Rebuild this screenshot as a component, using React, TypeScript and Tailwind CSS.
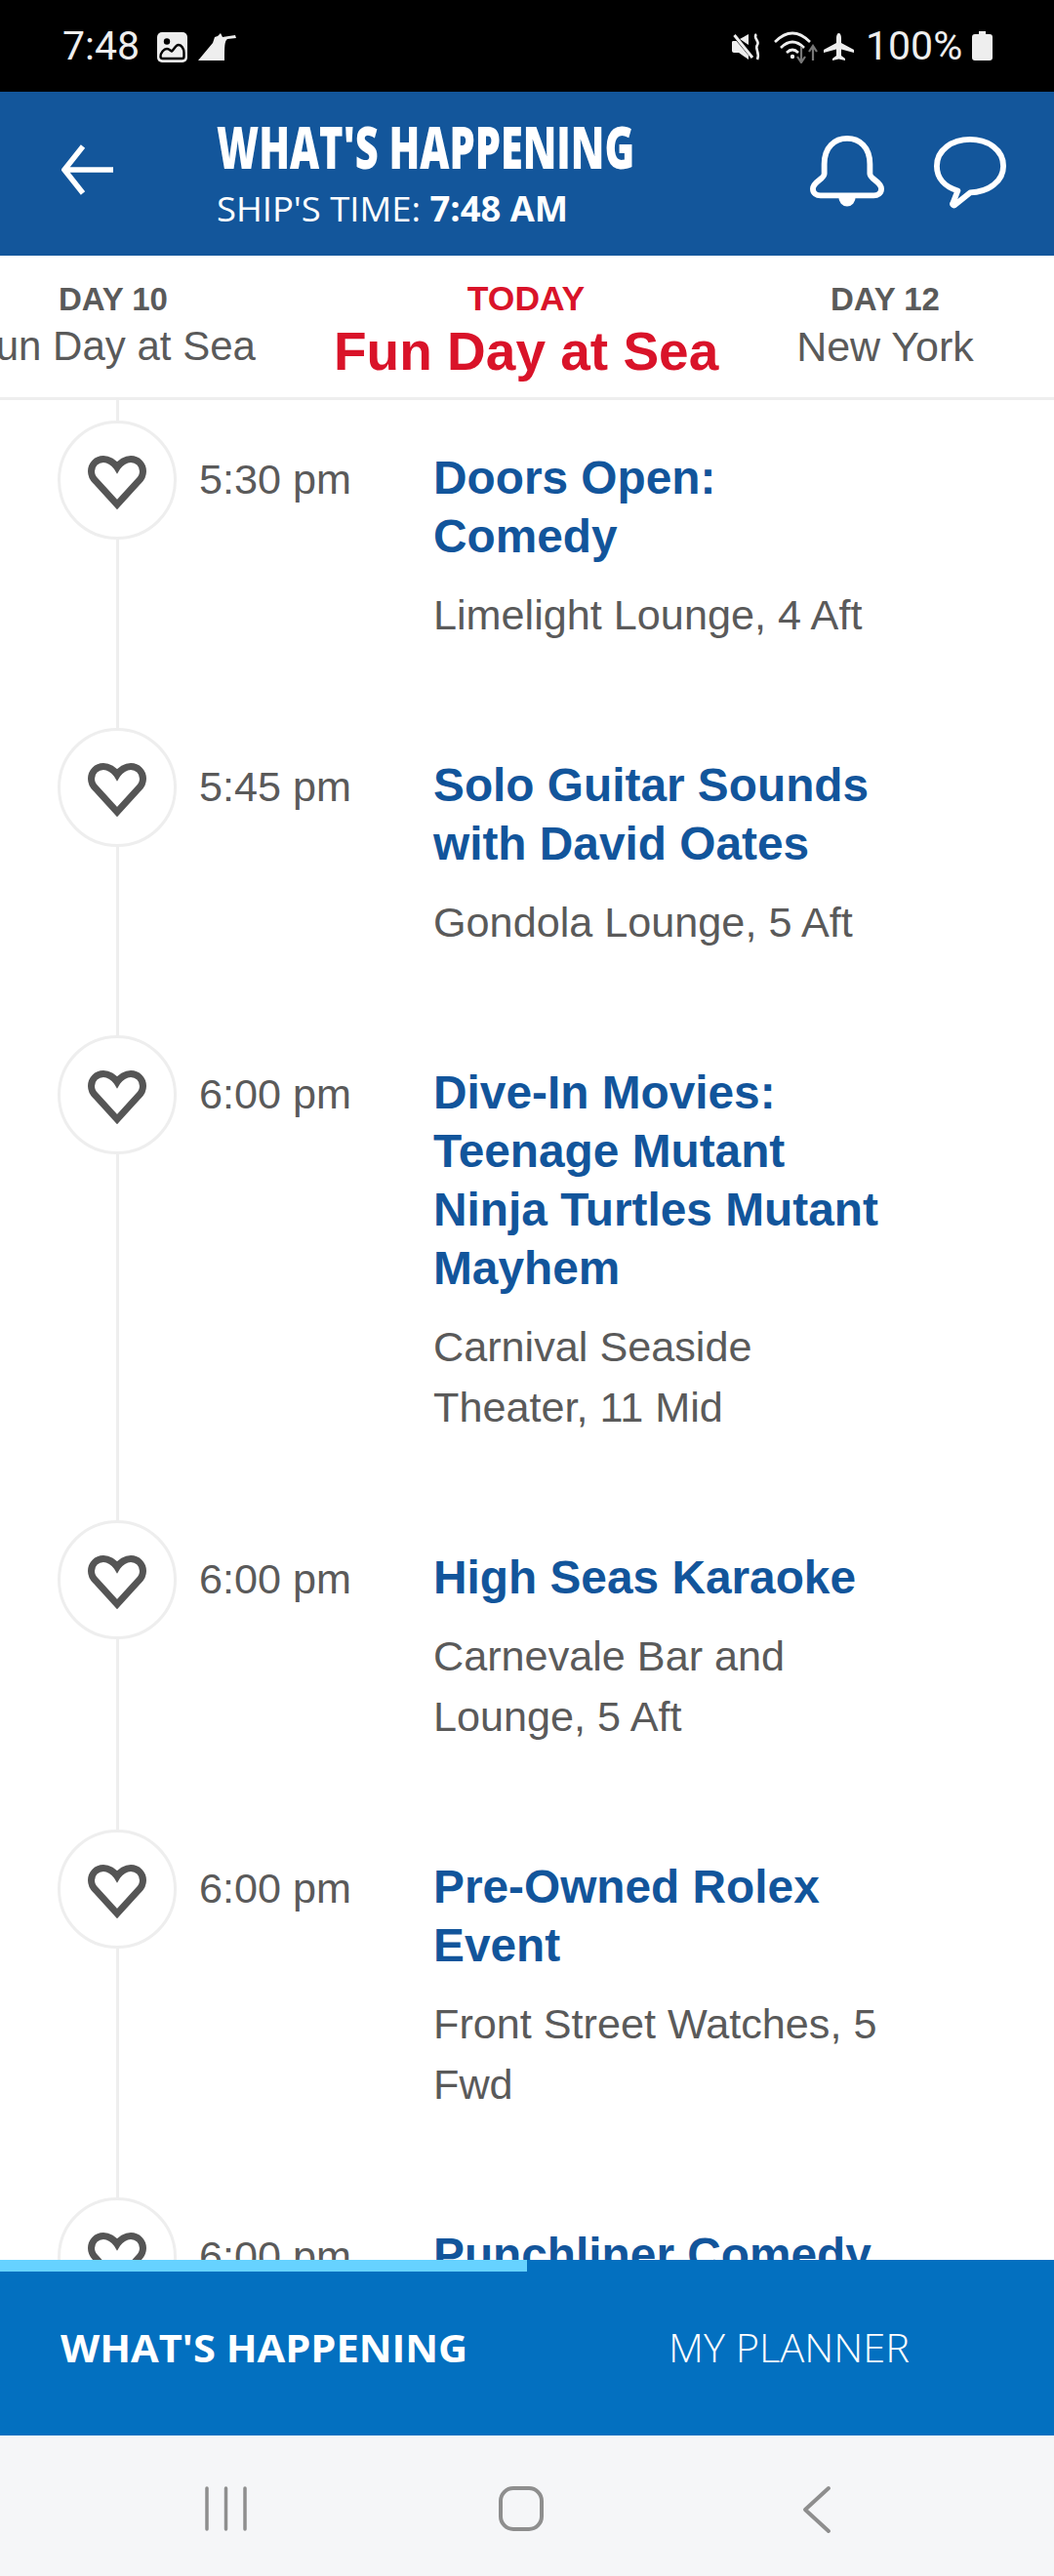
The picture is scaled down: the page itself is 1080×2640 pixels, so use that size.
import React from "react";

const events = [
  { time: "5:30 pm", title: "Doors Open: Comedy", place: "Limelight Lounge, 4 Aft" },
  { time: "5:45 pm", title: "Solo Guitar Sounds with David Oates", place: "Gondola Lounge, 5 Aft" },
  { time: "6:00 pm", title: "Dive-In Movies: Teenage Mutant Ninja Turtles Mutant Mayhem", place: "Carnival Seaside Theater, 11 Mid" },
  { time: "6:00 pm", title: "High Seas Karaoke", place: "Carnevale Bar and Lounge, 5 Aft" },
  { time: "6:00 pm", title: "Pre-Owned Rolex Event", place: "Front Street Watches, 5 Fwd" },
  { time: "6:00 pm", title: "Punchliner Comedy", place: "Punchliner Comedy Club, 4 Aft" },
];

function Heart() {
  return (
    <svg width="60" height="56" viewBox="0 0 60 56" fill="none" stroke="#555555" strokeWidth="7" strokeLinejoin="miter">
      <path d="M30 12 C27 7 21 3.5 16 3.5 C9 3.5 3.5 9 3.5 16 C3.5 20 5 23 8 26 L30 50 L52 26 C55 23 56.5 20 56.5 16 C56.5 9 51 3.5 44 3.5 C39 3.5 33 7 30 12 Z" />
    </svg>
  );
}

function EventRow({ time, title, place }: { time: string; title: string; place: string }) {
  return (
    <div className="flex shrink-0 pl-[59px]">
      <div className="flex w-[122px] shrink-0 flex-col items-center">
        <div className="flex h-[122px] w-[122px] shrink-0 items-center justify-center rounded-full border-[3px] border-[#eeeeee] pt-[6px]">
          <Heart />
        </div>
        <div className="w-[3px] flex-1 bg-[#eeeeee]" />
      </div>
      <div className="w-[263px] shrink-0 pl-[23px] pt-[29px] text-[43.2px] leading-[62px] text-[#5a5a5a]">{time}</div>
      <div className="w-[472px] shrink-0 pt-[29px] pb-[85px]">
        <div className="text-[47.8px] font-bold leading-[60px] text-[#12559b]">{title}</div>
        <div className="mt-[19px] w-[466px] text-[43.2px] leading-[62px] text-[#5a5a5a]">{place}</div>
      </div>
    </div>
  );
}

export default function App() {
  return (
    <div className="flex h-[2640px] w-[1080px] flex-col overflow-hidden bg-white font-['Liberation_Sans',sans-serif]">
      {/* status bar */}
      <div className="flex h-[94px] shrink-0 items-center bg-black pl-[64px] text-[#eeeeee]">
        <span className="w-[97px] font-['Roboto',sans-serif] text-[41px] leading-none">7:48</span>
        <svg width="31" height="31" viewBox="0 0 31 31" className="mt-[2px]">
          <rect width="31" height="31" rx="5" fill="#eeeeee" />
          <circle cx="10" cy="9.5" r="3.2" fill="#000" />
          <path d="M3.5 25 C3.5 21 7 17 10 17 C12.5 17 13.5 19 15 19.5 C17 18 19 13 22 13 C25 13 27.5 17 27.5 21 L27.5 25 C27.5 26.5 26.5 27 25.5 27 L5.5 27 C4.5 27 3.5 26.5 3.5 25 Z" fill="none" stroke="#000" strokeWidth="2.4" />
        </svg>
        <svg width="40" height="28" viewBox="0 0 40 28" className="ml-[11px] mt-[2px]">
          <path d="M0 28 L15 10 L17 4 L20 3 L23 0 L25 4 L38 2 L39 5 L30 6 C27 8 27 14 27 28 Z" fill="#eeeeee" />
        </svg>
        <svg width="30" height="28" viewBox="0 0 30 28" fill="#eeeeee" className="ml-[507px] mt-[2px]">
          <path d="M0 9 C0 8 1 8 2 8 L7 8 L17 16 L17 27 L7 20 L2 20 C1 20 0 19 0 18 Z" />
          <path d="M2 1 L22 25" stroke="#000" strokeWidth="5" />
          <path d="M2.5 2 L21 25" stroke="#eeeeee" strokeWidth="3" />
          <path d="M8 6 L17 1 L17 12 Z" />
          <path d="M25 1 C21 5 29 8 26 12 C23 16 29 19 26 27" fill="none" stroke="#eeeeee" strokeWidth="2.6" />
        </svg>
        <svg width="48" height="33" viewBox="0 0 48 33" fill="none" className="ml-[13px] mt-[2px]">
          <path d="M1 11 C13 -1 25 -1 37 11" stroke="#eeeeee" strokeWidth="2.6" />
          <path d="M7 17 C15 9 23 9 31 17" stroke="#eeeeee" strokeWidth="2.6" />
          <path d="M13 22 C17 18 21 18 25 22" stroke="#eeeeee" strokeWidth="2.6" />
          <circle cx="19" cy="26" r="2.2" fill="#eeeeee" />
          <path d="M28 16 L28 31 M24 26 L28 32 L32 26" stroke="#777777" strokeWidth="2.2" />
          <path d="M40 30 L40 16 M36 21 L40 15 L44 21" stroke="#777777" strokeWidth="2.2" />
        </svg>
        <svg width="31" height="28" viewBox="0 0 31 28" fill="#eeeeee" className="ml-[3px] mt-[2px]">
          <path d="M15.5 0 C17 0 18 2 18 5 L18 10 L31 17 L31 20 L18 16.5 L18 23 L22 26 L22 28 L15.5 26.5 L9 28 L9 26 L13 23 L13 16.5 L0 20 L0 17 L13 10 L13 5 C13 2 14 0 15.5 0 Z" />
        </svg>
        <span className="ml-[12px] w-[109px] font-['Roboto',sans-serif] text-[41px] leading-none">100%</span>
        <svg width="21" height="30" viewBox="0 0 21 30" fill="#eeeeee">
          <path d="M7 0 L14 0 L14 3 L18 3 C20 3 21 4 21 6 L21 27 C21 29 20 30 18 30 L3 30 C1 30 0 29 0 27 L0 6 C0 4 1 3 3 3 L7 3 Z" />
        </svg>
      </div>

      {/* header */}
      <div className="flex h-[168px] shrink-0 bg-[#13569b] text-white">
        <svg width="54" height="54" viewBox="0 0 54 54" fill="none" stroke="white" strokeWidth="5.5" className="ml-[63px] mt-[53px]">
          <path d="M22 3 L3 27 L22 51 M3 27 L53 27" />
        </svg>
        <div className="ml-[105px] w-[600px] pt-[24px] font-['Open_Sans',sans-serif]">
          <div className="origin-left scale-x-[0.692] whitespace-nowrap text-[60px] font-extrabold leading-[64px]">WHAT&apos;S HAPPENING</div>
          <div className="mt-[10px] origin-left scale-x-[1.04] whitespace-nowrap text-[35px] leading-[44px]">
            SHIP&apos;S TIME: <span className="font-bold">7:48 AM</span>
          </div>
        </div>
        <svg width="76" height="74" viewBox="0 0 78 76" fill="none" stroke="white" strokeWidth="6" className="ml-[8px] mt-[45px]">
          <path d="M15 40 L15 30 C15 12 26 3 39 3 C52 3 63 12 63 30 L63 40 C63 46 75 48 75 56 C75 61 71 63 67 63 L11 63 C7 63 3 61 3 56 C3 48 15 46 15 40 Z" />
          <path d="M33 64 C33 74 45 74 45 64" fill="white" />
        </svg>
        <svg width="74" height="74" viewBox="0 0 76 76" fill="none" stroke="white" strokeWidth="6" strokeLinejoin="round" className="ml-[51px] mt-[46px]">
          <path d="M38 3 C57 3 73 14 73 31 C73 47 58 58 38 59 L22 72 C20 73 19 71 20 70 L25 57 C12 53 3 44 3 31 C3 14 19 3 38 3 Z" />
        </svg>
      </div>

      {/* days */}
      <div className="flex h-[148px] shrink-0 overflow-hidden border-b-[3px] border-[#eeeeee] pl-0">
        <div className="ml-[-30px] w-[292px] shrink-0 whitespace-nowrap pt-[25px] text-center text-[#5a5a5a]">
          <div className="text-[33px] font-bold leading-[40px]">DAY 10</div>
          <div className="mt-[3px] text-[42px] leading-[50px]">Fun Day at Sea</div>
        </div>
        <div className="ml-[80px] w-[394px] shrink-0 whitespace-nowrap pt-[24px] text-center text-[#d91329]">
          <div className="text-[35.5px] font-bold leading-[40px]">TODAY</div>
          <div className="mt-[4px] text-[55px] font-bold leading-[60px]">Fun Day at Sea</div>
        </div>
        <div className="ml-[80px] w-[182px] shrink-0 whitespace-nowrap pt-[25px] text-center text-[#5a5a5a]">
          <div className="text-[33px] font-bold leading-[40px]">DAY 12</div>
          <div className="mt-[3px] text-[43px] leading-[50px]">New York</div>
        </div>
      </div>

      {/* list */}
      <div className="flex min-h-0 flex-1 flex-col overflow-hidden">
        <div className="ml-[119px] h-[21px] w-[3px] shrink-0 bg-[#eeeeee]" />
        {events.map((e, i) => (
          <EventRow key={i} {...e} />
        ))}
      </div>

      {/* tabs */}
      <div className="flex h-[180px] shrink-0 flex-col bg-[#0370c0] font-['Open_Sans',sans-serif] text-white">
        <div className="h-[12px] w-[540px] bg-[#66d2ff]" />
        <div className="flex flex-1 items-center pb-[12px]">
          <div className="ml-[62px] w-[623px] origin-left scale-x-[1.04] whitespace-nowrap text-[40px] font-bold">WHAT&apos;S HAPPENING</div>
          <div className="origin-left scale-x-[1.04] whitespace-nowrap text-[40px] font-light">MY PLANNER</div>
        </div>
      </div>

      {/* android nav */}
      <div className="flex h-[144px] shrink-0 items-start bg-[#f5f6f8] pt-[51px]">
        <svg width="43" height="48" viewBox="0 0 43 48" stroke="#8e8e8e" strokeWidth="3.5" strokeLinecap="round" className="ml-[210px]">
          <path d="M2 3 L2 45 M21.5 3 L21.5 45 M41 3 L41 45" />
        </svg>
        <svg width="46" height="48" viewBox="0 0 46 48" fill="none" stroke="#8e8e8e" strokeWidth="4" className="ml-[258px]">
          <rect x="2" y="3" width="42" height="42" rx="13" />
        </svg>
        <svg width="30" height="50" viewBox="0 0 30 50" fill="none" stroke="#8e8e8e" strokeWidth="4" strokeLinecap="round" strokeLinejoin="round" className="ml-[265px]">
          <path d="M27 3 L3 25 L27 47" />
        </svg>
      </div>
    </div>
  );
}
